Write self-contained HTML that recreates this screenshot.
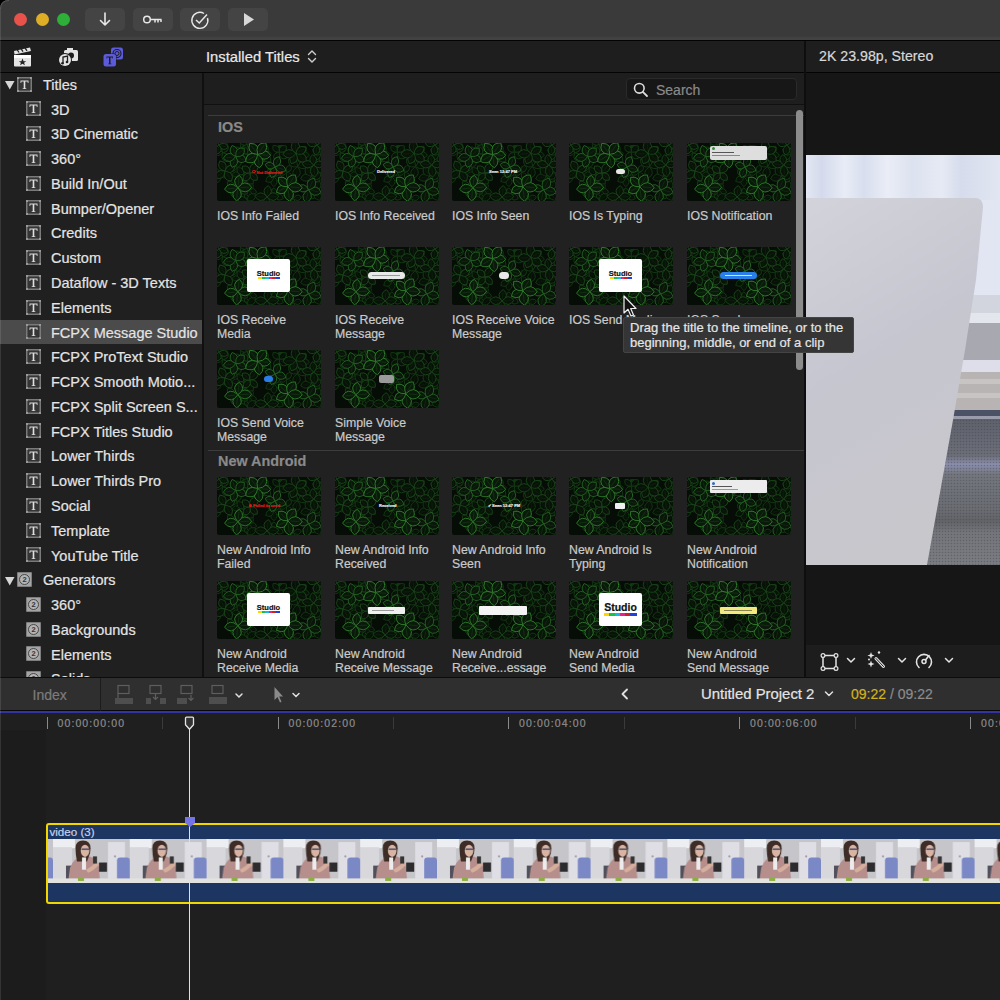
<!DOCTYPE html>
<html><head><meta charset="utf-8">
<style>
*{margin:0;padding:0;box-sizing:border-box}
html,body{width:1000px;height:1000px;overflow:hidden;background:#1e1e1e;font-family:"Liberation Sans",sans-serif;-webkit-text-stroke:0.2px currentColor}
.a{position:absolute}
.sb{position:absolute;font-size:14.5px;line-height:18px;color:#e4e4e4;white-space:nowrap}
.th{position:absolute;border-radius:2px}
.lb{position:absolute;font-size:12.3px;line-height:13.8px;color:#cacaca;white-space:nowrap}
.tt{position:absolute;font-size:4px;line-height:4px;color:#e8e8e8;white-space:nowrap;font-weight:bold}
.sep{position:absolute;left:208px;width:596px;height:1px;background:#3c3c3c}
.hdr{position:absolute;left:218px;font-size:14.4px;font-weight:bold;color:#8a8a8a;line-height:16px}
.btn{position:absolute;top:7.5px;width:40px;height:23.5px;border-radius:5px;background:#444}
.tl{position:absolute;top:716px;font-size:10.5px;color:#8c8c8c;line-height:14px;letter-spacing:1.1px}
.tk{position:absolute;top:717px;width:1px;height:12px;background:#8a8a8a}
.tks{position:absolute;top:717px;width:1px;height:12px;background:#3a3a3a}
</style></head><body>
<svg width="0" height="0" style="position:absolute">
<defs>
<symbol id="leaf" viewBox="0 0 104 58"><rect width="104" height="58" fill="#060d06"/><ellipse cx="64" cy="7" rx="6" ry="5" fill="#123a14"/><ellipse cx="88" cy="20" rx="3" ry="3" fill="#1a3a3a" opacity="0.6"/><g transform="translate(27.4 9.5) rotate(141)"><path d="M0 -4.5Q5.9 -0.5 0 4.5Q-5.9 -0.5 0 -4.5Z" fill="#071007" stroke="#143814" stroke-width="0.9"/><path d="M0 -2.7V2.7" stroke="#143814" stroke-width="0.4" opacity="0.5"/></g><g transform="translate(20.1 6.9) rotate(258)"><path d="M0 -4.5Q5.9 -0.5 0 4.5Q-5.9 -0.5 0 -4.5Z" fill="#071007" stroke="#143814" stroke-width="0.9"/><path d="M0 -2.7V2.7" stroke="#143814" stroke-width="0.4" opacity="0.5"/></g><g transform="translate(26.4 1.4) rotate(381)"><path d="M0 -5.0Q6.4 -0.5 0 5.0Q-6.4 -0.5 0 -5.0Z" fill="#071007" stroke="#143814" stroke-width="0.9"/><path d="M0 -3.0V3.0" stroke="#143814" stroke-width="0.4" opacity="0.5"/></g><g transform="translate(6.5 32.0) rotate(452)"><path d="M0 -4.4Q5.8 -0.4 0 4.4Q-5.8 -0.4 0 -4.4Z" fill="#071007" stroke="#143814" stroke-width="0.9"/><path d="M0 -2.7V2.7" stroke="#143814" stroke-width="0.4" opacity="0.5"/></g><g transform="translate(0.7 35.9) rotate(558)"><path d="M0 -4.2Q5.5 -0.4 0 4.2Q-5.5 -0.4 0 -4.2Z" fill="#071007" stroke="#143814" stroke-width="0.9"/><path d="M0 -2.5V2.5" stroke="#143814" stroke-width="0.4" opacity="0.5"/></g><g transform="translate(-0.5 28.6) rotate(682)"><path d="M0 -4.2Q5.4 -0.4 0 4.2Q-5.4 -0.4 0 -4.2Z" fill="#071007" stroke="#143814" stroke-width="0.9"/><path d="M0 -2.5V2.5" stroke="#143814" stroke-width="0.4" opacity="0.5"/></g><g transform="translate(25.6 35.1) rotate(148)"><path d="M0 -4.7Q6.2 -0.5 0 4.7Q-6.2 -0.5 0 -4.7Z" fill="#071007" stroke="#143814" stroke-width="0.9"/><path d="M0 -2.8V2.8" stroke="#143814" stroke-width="0.4" opacity="0.5"/></g><g transform="translate(19.1 31.4) rotate(266)"><path d="M0 -4.0Q5.2 -0.4 0 4.0Q-5.2 -0.4 0 -4.0Z" fill="#071007" stroke="#143814" stroke-width="0.9"/><path d="M0 -2.4V2.4" stroke="#143814" stroke-width="0.4" opacity="0.5"/></g><g transform="translate(25.9 27.7) rotate(400)"><path d="M0 -4.5Q5.8 -0.4 0 4.5Q-5.8 -0.4 0 -4.5Z" fill="#071007" stroke="#143814" stroke-width="0.9"/><path d="M0 -2.7V2.7" stroke="#143814" stroke-width="0.4" opacity="0.5"/></g><g transform="translate(25.2 51.3) rotate(329)"><path d="M0 -4.0Q5.1 -0.4 0 4.0Q-5.1 -0.4 0 -4.0Z" fill="#071007" stroke="#143814" stroke-width="0.9"/><path d="M0 -2.4V2.4" stroke="#143814" stroke-width="0.4" opacity="0.5"/></g><g transform="translate(30.7 52.5) rotate(418)"><path d="M0 -4.2Q5.4 -0.4 0 4.2Q-5.4 -0.4 0 -4.2Z" fill="#071007" stroke="#143814" stroke-width="0.9"/><path d="M0 -2.5V2.5" stroke="#143814" stroke-width="0.4" opacity="0.5"/></g><g transform="translate(29.6 58.2) rotate(506)"><path d="M0 -4.2Q5.5 -0.4 0 4.2Q-5.5 -0.4 0 -4.2Z" fill="#071007" stroke="#143814" stroke-width="0.9"/><path d="M0 -2.5V2.5" stroke="#143814" stroke-width="0.4" opacity="0.5"/></g><g transform="translate(24.4 57.0) rotate(591)"><path d="M0 -3.7Q4.8 -0.4 0 3.7Q-4.8 -0.4 0 -3.7Z" fill="#071007" stroke="#143814" stroke-width="0.9"/><path d="M0 -2.2V2.2" stroke="#143814" stroke-width="0.4" opacity="0.5"/></g><g transform="translate(79.6 8.1) rotate(311)"><path d="M0 -4.8Q6.2 -0.5 0 4.8Q-6.2 -0.5 0 -4.8Z" fill="#071007" stroke="#143814" stroke-width="0.9"/><path d="M0 -2.9V2.9" stroke="#143814" stroke-width="0.4" opacity="0.5"/></g><g transform="translate(86.0 7.2) rotate(395)"><path d="M0 -4.8Q6.3 -0.5 0 4.8Q-6.3 -0.5 0 -4.8Z" fill="#071007" stroke="#143814" stroke-width="0.9"/><path d="M0 -2.9V2.9" stroke="#143814" stroke-width="0.4" opacity="0.5"/></g><g transform="translate(87.8 11.8) rotate(457)"><path d="M0 -4.6Q6.0 -0.5 0 4.6Q-6.0 -0.5 0 -4.6Z" fill="#071007" stroke="#143814" stroke-width="0.9"/><path d="M0 -2.8V2.8" stroke="#143814" stroke-width="0.4" opacity="0.5"/></g><g transform="translate(83.5 15.8) rotate(537)"><path d="M0 -4.6Q6.0 -0.5 0 4.6Q-6.0 -0.5 0 -4.6Z" fill="#071007" stroke="#143814" stroke-width="0.9"/><path d="M0 -2.8V2.8" stroke="#143814" stroke-width="0.4" opacity="0.5"/></g><g transform="translate(79.1 12.8) rotate(609)"><path d="M0 -4.5Q5.8 -0.4 0 4.5Q-5.8 -0.4 0 -4.5Z" fill="#071007" stroke="#143814" stroke-width="0.9"/><path d="M0 -2.7V2.7" stroke="#143814" stroke-width="0.4" opacity="0.5"/></g><g transform="translate(102.8 45.4) rotate(397)"><path d="M0 -4.7Q6.1 -0.5 0 4.7Q-6.1 -0.5 0 -4.7Z" fill="#071007" stroke="#143814" stroke-width="0.9"/><path d="M0 -2.8V2.8" stroke="#143814" stroke-width="0.4" opacity="0.5"/></g><g transform="translate(104.2 51.7) rotate(480)"><path d="M0 -4.9Q6.4 -0.5 0 4.9Q-6.4 -0.5 0 -4.9Z" fill="#071007" stroke="#143814" stroke-width="0.9"/><path d="M0 -3.0V3.0" stroke="#143814" stroke-width="0.4" opacity="0.5"/></g><g transform="translate(97.1 52.3) rotate(582)"><path d="M0 -4.2Q5.4 -0.4 0 4.2Q-5.4 -0.4 0 -4.2Z" fill="#071007" stroke="#143814" stroke-width="0.9"/><path d="M0 -2.5V2.5" stroke="#143814" stroke-width="0.4" opacity="0.5"/></g><g transform="translate(96.2 45.9) rotate(672)"><path d="M0 -5.0Q6.5 -0.5 0 5.0Q-6.5 -0.5 0 -5.0Z" fill="#071007" stroke="#143814" stroke-width="0.9"/><path d="M0 -3.0V3.0" stroke="#143814" stroke-width="0.4" opacity="0.5"/></g><g transform="translate(66.0 29.8) rotate(263)"><path d="M0 -3.9Q5.0 -0.4 0 3.9Q-5.0 -0.4 0 -3.9Z" fill="#071007" stroke="#143814" stroke-width="0.9"/><path d="M0 -2.3V2.3" stroke="#143814" stroke-width="0.4" opacity="0.5"/></g><g transform="translate(71.7 25.8) rotate(387)"><path d="M0 -3.9Q5.1 -0.4 0 3.9Q-5.1 -0.4 0 -3.9Z" fill="#071007" stroke="#143814" stroke-width="0.9"/><path d="M0 -2.4V2.4" stroke="#143814" stroke-width="0.4" opacity="0.5"/></g><g transform="translate(72.2 33.1) rotate(509)"><path d="M0 -4.4Q5.7 -0.4 0 4.4Q-5.7 -0.4 0 -4.4Z" fill="#071007" stroke="#143814" stroke-width="0.9"/><path d="M0 -2.6V2.6" stroke="#143814" stroke-width="0.4" opacity="0.5"/></g><g transform="translate(100.4 42.9) rotate(385)"><path d="M0 -5.1Q6.6 -0.5 0 5.1Q-6.6 -0.5 0 -5.1Z" fill="#071007" stroke="#143814" stroke-width="0.9"/><path d="M0 -3.0V3.0" stroke="#143814" stroke-width="0.4" opacity="0.5"/></g><g transform="translate(100.6 52.4) rotate(515)"><path d="M0 -5.5Q7.1 -0.5 0 5.5Q-7.1 -0.5 0 -5.5Z" fill="#071007" stroke="#143814" stroke-width="0.9"/><path d="M0 -3.3V3.3" stroke="#143814" stroke-width="0.4" opacity="0.5"/></g><g transform="translate(92.4 46.7) rotate(637)"><path d="M0 -5.9Q7.6 -0.6 0 5.9Q-7.6 -0.6 0 -5.9Z" fill="#071007" stroke="#143814" stroke-width="0.9"/><path d="M0 -3.5V3.5" stroke="#143814" stroke-width="0.4" opacity="0.5"/></g><g transform="translate(97.0 29.1) rotate(390)"><path d="M0 -4.8Q6.2 -0.5 0 4.8Q-6.2 -0.5 0 -4.8Z" fill="#071007" stroke="#143814" stroke-width="0.9"/><path d="M0 -2.9V2.9" stroke="#143814" stroke-width="0.4" opacity="0.5"/></g><g transform="translate(98.9 35.2) rotate(475)"><path d="M0 -4.8Q6.2 -0.5 0 4.8Q-6.2 -0.5 0 -4.8Z" fill="#071007" stroke="#143814" stroke-width="0.9"/><path d="M0 -2.9V2.9" stroke="#143814" stroke-width="0.4" opacity="0.5"/></g><g transform="translate(94.0 38.1) rotate(546)"><path d="M0 -4.9Q6.4 -0.5 0 4.9Q-6.4 -0.5 0 -4.9Z" fill="#071007" stroke="#143814" stroke-width="0.9"/><path d="M0 -2.9V2.9" stroke="#143814" stroke-width="0.4" opacity="0.5"/></g><g transform="translate(89.1 34.5) rotate(617)"><path d="M0 -5.6Q7.3 -0.6 0 5.6Q-7.3 -0.6 0 -5.6Z" fill="#071007" stroke="#143814" stroke-width="0.9"/><path d="M0 -3.4V3.4" stroke="#143814" stroke-width="0.4" opacity="0.5"/></g><g transform="translate(91.8 28.6) rotate(690)"><path d="M0 -5.4Q7.0 -0.5 0 5.4Q-7.0 -0.5 0 -5.4Z" fill="#071007" stroke="#143814" stroke-width="0.9"/><path d="M0 -3.2V3.2" stroke="#143814" stroke-width="0.4" opacity="0.5"/></g><g transform="translate(16.2 25.4) rotate(259)"><path d="M0 -4.2Q5.4 -0.4 0 4.2Q-5.4 -0.4 0 -4.2Z" fill="#071007" stroke="#143814" stroke-width="0.9"/><path d="M0 -2.5V2.5" stroke="#143814" stroke-width="0.4" opacity="0.5"/></g><g transform="translate(21.4 20.4) rotate(375)"><path d="M0 -4.3Q5.6 -0.4 0 4.3Q-5.6 -0.4 0 -4.3Z" fill="#071007" stroke="#143814" stroke-width="0.9"/><path d="M0 -2.6V2.6" stroke="#143814" stroke-width="0.4" opacity="0.5"/></g><g transform="translate(23.3 28.1) rotate(499)"><path d="M0 -4.7Q6.1 -0.5 0 4.7Q-6.1 -0.5 0 -4.7Z" fill="#071007" stroke="#143814" stroke-width="0.9"/><path d="M0 -2.8V2.8" stroke="#143814" stroke-width="0.4" opacity="0.5"/></g><g transform="translate(35.7 48.3) rotate(106)"><path d="M0 -4.1Q5.3 -0.4 0 4.1Q-5.3 -0.4 0 -4.1Z" fill="#071007" stroke="#143814" stroke-width="0.9"/><path d="M0 -2.5V2.5" stroke="#143814" stroke-width="0.4" opacity="0.5"/></g><g transform="translate(32.3 50.8) rotate(171)"><path d="M0 -3.7Q4.8 -0.4 0 3.7Q-4.8 -0.4 0 -3.7Z" fill="#071007" stroke="#143814" stroke-width="0.9"/><path d="M0 -2.2V2.2" stroke="#143814" stroke-width="0.4" opacity="0.5"/></g><g transform="translate(27.9 48.4) rotate(252)"><path d="M0 -4.1Q5.3 -0.4 0 4.1Q-5.3 -0.4 0 -4.1Z" fill="#071007" stroke="#143814" stroke-width="0.9"/><path d="M0 -2.4V2.4" stroke="#143814" stroke-width="0.4" opacity="0.5"/></g><g transform="translate(29.6 43.6) rotate(329)"><path d="M0 -4.2Q5.4 -0.4 0 4.2Q-5.4 -0.4 0 -4.2Z" fill="#071007" stroke="#143814" stroke-width="0.9"/><path d="M0 -2.5V2.5" stroke="#143814" stroke-width="0.4" opacity="0.5"/></g><g transform="translate(33.6 43.7) rotate(388)"><path d="M0 -4.0Q5.1 -0.4 0 4.0Q-5.1 -0.4 0 -4.0Z" fill="#071007" stroke="#143814" stroke-width="0.9"/><path d="M0 -2.4V2.4" stroke="#143814" stroke-width="0.4" opacity="0.5"/></g><g transform="translate(102.6 25.2) rotate(347)"><path d="M0 -5.0Q6.5 -0.5 0 5.0Q-6.5 -0.5 0 -5.0Z" fill="#071007" stroke="#143814" stroke-width="0.9"/><path d="M0 -3.0V3.0" stroke="#143814" stroke-width="0.4" opacity="0.5"/></g><g transform="translate(109.0 30.5) rotate(454)"><path d="M0 -5.3Q6.9 -0.5 0 5.3Q-6.9 -0.5 0 -5.3Z" fill="#071007" stroke="#143814" stroke-width="0.9"/><path d="M0 -3.2V3.2" stroke="#143814" stroke-width="0.4" opacity="0.5"/></g><g transform="translate(100.4 33.1) rotate(588)"><path d="M0 -4.6Q5.9 -0.5 0 4.6Q-5.9 -0.5 0 -4.6Z" fill="#071007" stroke="#143814" stroke-width="0.9"/><path d="M0 -2.7V2.7" stroke="#143814" stroke-width="0.4" opacity="0.5"/></g><g transform="translate(105.0 15.7) rotate(164)"><path d="M0 -4.5Q5.9 -0.5 0 4.5Q-5.9 -0.5 0 -4.5Z" fill="#071007" stroke="#143814" stroke-width="0.9"/><path d="M0 -2.7V2.7" stroke="#143814" stroke-width="0.4" opacity="0.5"/></g><g transform="translate(99.9 13.6) rotate(240)"><path d="M0 -4.4Q5.8 -0.4 0 4.4Q-5.8 -0.4 0 -4.4Z" fill="#071007" stroke="#143814" stroke-width="0.9"/><path d="M0 -2.7V2.7" stroke="#143814" stroke-width="0.4" opacity="0.5"/></g><g transform="translate(99.8 8.9) rotate(302)"><path d="M0 -4.6Q6.0 -0.5 0 4.6Q-6.0 -0.5 0 -4.6Z" fill="#071007" stroke="#143814" stroke-width="0.9"/><path d="M0 -2.8V2.8" stroke="#143814" stroke-width="0.4" opacity="0.5"/></g><g transform="translate(105.6 7.6) rotate(387)"><path d="M0 -4.2Q5.5 -0.4 0 4.2Q-5.5 -0.4 0 -4.2Z" fill="#071007" stroke="#143814" stroke-width="0.9"/><path d="M0 -2.5V2.5" stroke="#143814" stroke-width="0.4" opacity="0.5"/></g><g transform="translate(108.4 10.9) rotate(444)"><path d="M0 -4.7Q6.2 -0.5 0 4.7Q-6.2 -0.5 0 -4.7Z" fill="#071007" stroke="#143814" stroke-width="0.9"/><path d="M0 -2.8V2.8" stroke="#143814" stroke-width="0.4" opacity="0.5"/></g><g transform="translate(42.2 7.7) rotate(309)"><path d="M0 -4.7Q6.1 -0.5 0 4.7Q-6.1 -0.5 0 -4.7Z" fill="#071007" stroke="#143814" stroke-width="0.9"/><path d="M0 -2.8V2.8" stroke="#143814" stroke-width="0.4" opacity="0.5"/></g><g transform="translate(47.0 5.8) rotate(373)"><path d="M0 -5.0Q6.5 -0.5 0 5.0Q-6.5 -0.5 0 -5.0Z" fill="#071007" stroke="#143814" stroke-width="0.9"/><path d="M0 -3.0V3.0" stroke="#143814" stroke-width="0.4" opacity="0.5"/></g><g transform="translate(50.1 10.7) rotate(451)"><path d="M0 -4.3Q5.5 -0.4 0 4.3Q-5.5 -0.4 0 -4.3Z" fill="#071007" stroke="#143814" stroke-width="0.9"/><path d="M0 -2.6V2.6" stroke="#143814" stroke-width="0.4" opacity="0.5"/></g><g transform="translate(47.0 14.9) rotate(525)"><path d="M0 -4.4Q5.7 -0.4 0 4.4Q-5.7 -0.4 0 -4.4Z" fill="#071007" stroke="#143814" stroke-width="0.9"/><path d="M0 -2.6V2.6" stroke="#143814" stroke-width="0.4" opacity="0.5"/></g><g transform="translate(42.3 14.1) rotate(587)"><path d="M0 -5.0Q6.5 -0.5 0 5.0Q-6.5 -0.5 0 -5.0Z" fill="#071007" stroke="#143814" stroke-width="0.9"/><path d="M0 -3.0V3.0" stroke="#143814" stroke-width="0.4" opacity="0.5"/></g><g transform="translate(62.2 54.0) rotate(111)"><path d="M0 -4.4Q5.7 -0.4 0 4.4Q-5.7 -0.4 0 -4.4Z" fill="#071007" stroke="#143814" stroke-width="0.9"/><path d="M0 -2.6V2.6" stroke="#143814" stroke-width="0.4" opacity="0.5"/></g><g transform="translate(54.9 55.5) rotate(226)"><path d="M0 -4.5Q5.8 -0.4 0 4.5Q-5.8 -0.4 0 -4.5Z" fill="#071007" stroke="#143814" stroke-width="0.9"/><path d="M0 -2.7V2.7" stroke="#143814" stroke-width="0.4" opacity="0.5"/></g><g transform="translate(57.2 48.7) rotate(347)"><path d="M0 -3.9Q5.0 -0.4 0 3.9Q-5.0 -0.4 0 -3.9Z" fill="#071007" stroke="#143814" stroke-width="0.9"/><path d="M0 -2.3V2.3" stroke="#143814" stroke-width="0.4" opacity="0.5"/></g><g transform="translate(32.6 37.3) rotate(134)"><path d="M0 -5.1Q6.7 -0.5 0 5.1Q-6.7 -0.5 0 -5.1Z" fill="#071007" stroke="#143814" stroke-width="0.9"/><path d="M0 -3.1V3.1" stroke="#143814" stroke-width="0.4" opacity="0.5"/></g><g transform="translate(23.3 35.3) rotate(255)"><path d="M0 -5.7Q7.4 -0.6 0 5.7Q-7.4 -0.6 0 -5.7Z" fill="#071007" stroke="#143814" stroke-width="0.9"/><path d="M0 -3.4V3.4" stroke="#143814" stroke-width="0.4" opacity="0.5"/></g><g transform="translate(30.3 29.2) rotate(378)"><path d="M0 -4.8Q6.2 -0.5 0 4.8Q-6.2 -0.5 0 -4.8Z" fill="#071007" stroke="#143814" stroke-width="0.9"/><path d="M0 -2.9V2.9" stroke="#143814" stroke-width="0.4" opacity="0.5"/></g><g transform="translate(34.4 3.5) rotate(117)"><path d="M0 -4.6Q5.9 -0.5 0 4.6Q-5.9 -0.5 0 -4.6Z" fill="#071007" stroke="#143814" stroke-width="0.9"/><path d="M0 -2.7V2.7" stroke="#143814" stroke-width="0.4" opacity="0.5"/></g><g transform="translate(27.9 5.6) rotate(210)"><path d="M0 -4.7Q6.2 -0.5 0 4.7Q-6.2 -0.5 0 -4.7Z" fill="#071007" stroke="#143814" stroke-width="0.9"/><path d="M0 -2.8V2.8" stroke="#143814" stroke-width="0.4" opacity="0.5"/></g><g transform="translate(26.6 -0.6) rotate(299)"><path d="M0 -4.2Q5.4 -0.4 0 4.2Q-5.4 -0.4 0 -4.2Z" fill="#071007" stroke="#143814" stroke-width="0.9"/><path d="M0 -2.5V2.5" stroke="#143814" stroke-width="0.4" opacity="0.5"/></g><g transform="translate(32.3 -2.9) rotate(385)"><path d="M0 -4.9Q6.3 -0.5 0 4.9Q-6.3 -0.5 0 -4.9Z" fill="#071007" stroke="#143814" stroke-width="0.9"/><path d="M0 -2.9V2.9" stroke="#143814" stroke-width="0.4" opacity="0.5"/></g><g transform="translate(75.6 59.8) rotate(192)"><path d="M0 -4.2Q5.5 -0.4 0 4.2Q-5.5 -0.4 0 -4.2Z" fill="#071007" stroke="#143814" stroke-width="0.9"/><path d="M0 -2.5V2.5" stroke="#143814" stroke-width="0.4" opacity="0.5"/></g><g transform="translate(73.9 52.4) rotate(322)"><path d="M0 -4.1Q5.4 -0.4 0 4.1Q-5.4 -0.4 0 -4.1Z" fill="#071007" stroke="#143814" stroke-width="0.9"/><path d="M0 -2.5V2.5" stroke="#143814" stroke-width="0.4" opacity="0.5"/></g><g transform="translate(80.4 54.8) rotate(437)"><path d="M0 -4.1Q5.4 -0.4 0 4.1Q-5.4 -0.4 0 -4.1Z" fill="#071007" stroke="#143814" stroke-width="0.9"/><path d="M0 -2.5V2.5" stroke="#143814" stroke-width="0.4" opacity="0.5"/></g><g transform="translate(76.1 20.0) rotate(310)"><path d="M0 -5.9Q7.6 -0.6 0 5.9Q-7.6 -0.6 0 -5.9Z" fill="#071007" stroke="#143814" stroke-width="0.9"/><path d="M0 -3.5V3.5" stroke="#143814" stroke-width="0.4" opacity="0.5"/></g><g transform="translate(86.2 22.1) rotate(433)"><path d="M0 -5.9Q7.6 -0.6 0 5.9Q-7.6 -0.6 0 -5.9Z" fill="#071007" stroke="#143814" stroke-width="0.9"/><path d="M0 -3.5V3.5" stroke="#143814" stroke-width="0.4" opacity="0.5"/></g><g transform="translate(79.6 29.5) rotate(550)"><path d="M0 -5.8Q7.6 -0.6 0 5.8Q-7.6 -0.6 0 -5.8Z" fill="#071007" stroke="#143814" stroke-width="0.9"/><path d="M0 -3.5V3.5" stroke="#143814" stroke-width="0.4" opacity="0.5"/></g><g transform="translate(33.3 15.0) rotate(144)"><path d="M0 -4.8Q6.2 -0.5 0 4.8Q-6.2 -0.5 0 -4.8Z" fill="#071007" stroke="#143814" stroke-width="0.9"/><path d="M0 -2.9V2.9" stroke="#143814" stroke-width="0.4" opacity="0.5"/></g><g transform="translate(27.3 14.0) rotate(228)"><path d="M0 -4.3Q5.6 -0.4 0 4.3Q-5.6 -0.4 0 -4.3Z" fill="#071007" stroke="#143814" stroke-width="0.9"/><path d="M0 -2.6V2.6" stroke="#143814" stroke-width="0.4" opacity="0.5"/></g><g transform="translate(27.8 7.4) rotate(324)"><path d="M0 -4.5Q5.9 -0.5 0 4.5Q-5.9 -0.5 0 -4.5Z" fill="#071007" stroke="#143814" stroke-width="0.9"/><path d="M0 -2.7V2.7" stroke="#143814" stroke-width="0.4" opacity="0.5"/></g><g transform="translate(33.9 8.4) rotate(412)"><path d="M0 -4.3Q5.6 -0.4 0 4.3Q-5.6 -0.4 0 -4.3Z" fill="#071007" stroke="#143814" stroke-width="0.9"/><path d="M0 -2.6V2.6" stroke="#143814" stroke-width="0.4" opacity="0.5"/></g><g transform="translate(59.8 13.0) rotate(214)"><path d="M0 -4.5Q5.9 -0.5 0 4.5Q-5.9 -0.5 0 -4.5Z" fill="#071007" stroke="#143814" stroke-width="0.9"/><path d="M0 -2.7V2.7" stroke="#143814" stroke-width="0.4" opacity="0.5"/></g><g transform="translate(59.1 5.9) rotate(316)"><path d="M0 -4.5Q5.9 -0.5 0 4.5Q-5.9 -0.5 0 -4.5Z" fill="#071007" stroke="#143814" stroke-width="0.9"/><path d="M0 -2.7V2.7" stroke="#143814" stroke-width="0.4" opacity="0.5"/></g><g transform="translate(65.8 6.0) rotate(408)"><path d="M0 -4.7Q6.2 -0.5 0 4.7Q-6.2 -0.5 0 -4.7Z" fill="#071007" stroke="#143814" stroke-width="0.9"/><path d="M0 -2.8V2.8" stroke="#143814" stroke-width="0.4" opacity="0.5"/></g><g transform="translate(65.8 12.4) rotate(492)"><path d="M0 -4.7Q6.1 -0.5 0 4.7Q-6.1 -0.5 0 -4.7Z" fill="#071007" stroke="#143814" stroke-width="0.9"/><path d="M0 -2.8V2.8" stroke="#143814" stroke-width="0.4" opacity="0.5"/></g><g transform="translate(16.4 49.5) rotate(197)"><path d="M0 -4.2Q5.4 -0.4 0 4.2Q-5.4 -0.4 0 -4.2Z" fill="#071007" stroke="#143814" stroke-width="0.9"/><path d="M0 -2.5V2.5" stroke="#143814" stroke-width="0.4" opacity="0.5"/></g><g transform="translate(14.0 42.1) rotate(313)"><path d="M0 -4.9Q6.4 -0.5 0 4.9Q-6.4 -0.5 0 -4.9Z" fill="#071007" stroke="#143814" stroke-width="0.9"/><path d="M0 -3.0V3.0" stroke="#143814" stroke-width="0.4" opacity="0.5"/></g><g transform="translate(22.0 43.8) rotate(429)"><path d="M0 -4.7Q6.1 -0.5 0 4.7Q-6.1 -0.5 0 -4.7Z" fill="#071007" stroke="#143814" stroke-width="0.9"/><path d="M0 -2.8V2.8" stroke="#143814" stroke-width="0.4" opacity="0.5"/></g><g transform="translate(49.8 15.2) rotate(128)"><path d="M0 -5.2Q6.7 -0.5 0 5.2Q-6.7 -0.5 0 -5.2Z" fill="#071007" stroke="#143814" stroke-width="0.9"/><path d="M0 -3.1V3.1" stroke="#143814" stroke-width="0.4" opacity="0.5"/></g><g transform="translate(41.4 14.2) rotate(243)"><path d="M0 -4.9Q6.3 -0.5 0 4.9Q-6.3 -0.5 0 -4.9Z" fill="#071007" stroke="#143814" stroke-width="0.9"/><path d="M0 -2.9V2.9" stroke="#143814" stroke-width="0.4" opacity="0.5"/></g><g transform="translate(47.5 6.6) rotate(379)"><path d="M0 -5.7Q7.4 -0.6 0 5.7Q-7.4 -0.6 0 -5.7Z" fill="#071007" stroke="#143814" stroke-width="0.9"/><path d="M0 -3.4V3.4" stroke="#143814" stroke-width="0.4" opacity="0.5"/></g><g transform="translate(8.5 14.3) rotate(149)"><path d="M0 -5.3Q6.9 -0.5 0 5.3Q-6.9 -0.5 0 -5.3Z" fill="#071007" stroke="#143814" stroke-width="0.9"/><path d="M0 -3.2V3.2" stroke="#143814" stroke-width="0.4" opacity="0.5"/></g><g transform="translate(1.1 9.6) rotate(272)"><path d="M0 -4.7Q6.1 -0.5 0 4.7Q-6.1 -0.5 0 -4.7Z" fill="#071007" stroke="#143814" stroke-width="0.9"/><path d="M0 -2.8V2.8" stroke="#143814" stroke-width="0.4" opacity="0.5"/></g><g transform="translate(7.9 5.3) rotate(385)"><path d="M0 -5.0Q6.5 -0.5 0 5.0Q-6.5 -0.5 0 -5.0Z" fill="#071007" stroke="#143814" stroke-width="0.9"/><path d="M0 -3.0V3.0" stroke="#143814" stroke-width="0.4" opacity="0.5"/></g><g transform="translate(61.5 35.0) rotate(104)"><path d="M0 -4.9Q6.3 -0.5 0 4.9Q-6.3 -0.5 0 -4.9Z" fill="#071007" stroke="#143814" stroke-width="0.9"/><path d="M0 -2.9V2.9" stroke="#143814" stroke-width="0.4" opacity="0.5"/></g><g transform="translate(56.9 38.7) rotate(179)"><path d="M0 -4.9Q6.4 -0.5 0 4.9Q-6.4 -0.5 0 -4.9Z" fill="#071007" stroke="#143814" stroke-width="0.9"/><path d="M0 -2.9V2.9" stroke="#143814" stroke-width="0.4" opacity="0.5"/></g><g transform="translate(52.8 36.1) rotate(240)"><path d="M0 -4.6Q6.0 -0.5 0 4.6Q-6.0 -0.5 0 -4.6Z" fill="#071007" stroke="#143814" stroke-width="0.9"/><path d="M0 -2.8V2.8" stroke="#143814" stroke-width="0.4" opacity="0.5"/></g><g transform="translate(53.9 30.1) rotate(322)"><path d="M0 -4.7Q6.1 -0.5 0 4.7Q-6.1 -0.5 0 -4.7Z" fill="#071007" stroke="#143814" stroke-width="0.9"/><path d="M0 -2.8V2.8" stroke="#143814" stroke-width="0.4" opacity="0.5"/></g><g transform="translate(59.4 29.8) rotate(393)"><path d="M0 -4.8Q6.2 -0.5 0 4.8Q-6.2 -0.5 0 -4.8Z" fill="#071007" stroke="#143814" stroke-width="0.9"/><path d="M0 -2.9V2.9" stroke="#143814" stroke-width="0.4" opacity="0.5"/></g><g transform="translate(32.4 62.9) rotate(159)"><path d="M0 -5.4Q7.0 -0.5 0 5.4Q-7.0 -0.5 0 -5.4Z" fill="#071007" stroke="#143814" stroke-width="0.9"/><path d="M0 -3.2V3.2" stroke="#143814" stroke-width="0.4" opacity="0.5"/></g><g transform="translate(25.5 56.9) rotate(280)"><path d="M0 -5.1Q6.6 -0.5 0 5.1Q-6.6 -0.5 0 -5.1Z" fill="#071007" stroke="#143814" stroke-width="0.9"/><path d="M0 -3.0V3.0" stroke="#143814" stroke-width="0.4" opacity="0.5"/></g><g transform="translate(34.4 54.4) rotate(409)"><path d="M0 -5.2Q6.7 -0.5 0 5.2Q-6.7 -0.5 0 -5.2Z" fill="#071007" stroke="#143814" stroke-width="0.9"/><path d="M0 -3.1V3.1" stroke="#143814" stroke-width="0.4" opacity="0.5"/></g><g transform="translate(104.7 2.6) rotate(97)"><path d="M0 -4.7Q6.1 -0.5 0 4.7Q-6.1 -0.5 0 -4.7Z" fill="#081308" stroke="#1a441a" stroke-width="0.9"/><path d="M0 -2.8V2.8" stroke="#1a441a" stroke-width="0.4" opacity="0.5"/></g><g transform="translate(99.4 7.1) rotate(187)"><path d="M0 -5.1Q6.7 -0.5 0 5.1Q-6.7 -0.5 0 -5.1Z" fill="#081308" stroke="#1a441a" stroke-width="0.9"/><path d="M0 -3.1V3.1" stroke="#1a441a" stroke-width="0.4" opacity="0.5"/></g><g transform="translate(94.9 0.3) rotate(289)"><path d="M0 -5.4Q7.0 -0.5 0 5.4Q-7.0 -0.5 0 -5.4Z" fill="#081308" stroke="#1a441a" stroke-width="0.9"/><path d="M0 -3.2V3.2" stroke="#1a441a" stroke-width="0.4" opacity="0.5"/></g><g transform="translate(100.7 -2.8) rotate(368)"><path d="M0 -4.9Q6.4 -0.5 0 4.9Q-6.4 -0.5 0 -4.9Z" fill="#081308" stroke="#1a441a" stroke-width="0.9"/><path d="M0 -2.9V2.9" stroke="#1a441a" stroke-width="0.4" opacity="0.5"/></g><g transform="translate(6.6 3.3) rotate(105)"><path d="M0 -4.8Q6.2 -0.5 0 4.8Q-6.2 -0.5 0 -4.8Z" fill="#081308" stroke="#1a441a" stroke-width="0.9"/><path d="M0 -2.9V2.9" stroke="#1a441a" stroke-width="0.4" opacity="0.5"/></g><g transform="translate(1.3 6.5) rotate(188)"><path d="M0 -4.5Q5.9 -0.5 0 4.5Q-5.9 -0.5 0 -4.5Z" fill="#081308" stroke="#1a441a" stroke-width="0.9"/><path d="M0 -2.7V2.7" stroke="#1a441a" stroke-width="0.4" opacity="0.5"/></g><g transform="translate(-3.0 1.6) rotate(275)"><path d="M0 -5.0Q6.6 -0.5 0 5.0Q-6.6 -0.5 0 -5.0Z" fill="#081308" stroke="#1a441a" stroke-width="0.9"/><path d="M0 -3.0V3.0" stroke="#1a441a" stroke-width="0.4" opacity="0.5"/></g><g transform="translate(3.2 -3.0) rotate(373)"><path d="M0 -5.1Q6.6 -0.5 0 5.1Q-6.6 -0.5 0 -5.1Z" fill="#081308" stroke="#1a441a" stroke-width="0.9"/><path d="M0 -3.1V3.1" stroke="#1a441a" stroke-width="0.4" opacity="0.5"/></g><g transform="translate(84.2 14.4) rotate(128)"><path d="M0 -6.5Q8.5 -0.7 0 6.5Q-8.5 -0.7 0 -6.5Z" fill="#081308" stroke="#1a441a" stroke-width="0.9"/><path d="M0 -3.9V3.9" stroke="#1a441a" stroke-width="0.4" opacity="0.5"/></g><g transform="translate(76.7 15.5) rotate(204)"><path d="M0 -5.6Q7.3 -0.6 0 5.6Q-7.3 -0.6 0 -5.6Z" fill="#081308" stroke="#1a441a" stroke-width="0.9"/><path d="M0 -3.4V3.4" stroke="#1a441a" stroke-width="0.4" opacity="0.5"/></g><g transform="translate(72.4 10.8) rotate(267)"><path d="M0 -6.6Q8.5 -0.7 0 6.6Q-8.5 -0.7 0 -6.6Z" fill="#081308" stroke="#1a441a" stroke-width="0.9"/><path d="M0 -3.9V3.9" stroke="#1a441a" stroke-width="0.4" opacity="0.5"/></g><g transform="translate(78.4 3.9) rotate(354)"><path d="M0 -6.5Q8.5 -0.7 0 6.5Q-8.5 -0.7 0 -6.5Z" fill="#081308" stroke="#1a441a" stroke-width="0.9"/><path d="M0 -3.9V3.9" stroke="#1a441a" stroke-width="0.4" opacity="0.5"/></g><g transform="translate(84.0 7.5) rotate(420)"><path d="M0 -5.8Q7.5 -0.6 0 5.8Q-7.5 -0.6 0 -5.8Z" fill="#081308" stroke="#1a441a" stroke-width="0.9"/><path d="M0 -3.5V3.5" stroke="#1a441a" stroke-width="0.4" opacity="0.5"/></g><g transform="translate(101.9 21.4) rotate(83)"><path d="M0 -5.2Q6.8 -0.5 0 5.2Q-6.8 -0.5 0 -5.2Z" fill="#081308" stroke="#1a441a" stroke-width="0.9"/><path d="M0 -3.1V3.1" stroke="#1a441a" stroke-width="0.4" opacity="0.5"/></g><g transform="translate(97.2 28.0) rotate(175)"><path d="M0 -6.0Q7.8 -0.6 0 6.0Q-7.8 -0.6 0 -6.0Z" fill="#081308" stroke="#1a441a" stroke-width="0.9"/><path d="M0 -3.6V3.6" stroke="#1a441a" stroke-width="0.4" opacity="0.5"/></g><g transform="translate(90.9 21.3) rotate(277)"><path d="M0 -5.8Q7.5 -0.6 0 5.8Q-7.5 -0.6 0 -5.8Z" fill="#081308" stroke="#1a441a" stroke-width="0.9"/><path d="M0 -3.5V3.5" stroke="#1a441a" stroke-width="0.4" opacity="0.5"/></g><g transform="translate(96.2 16.8) rotate(354)"><path d="M0 -5.2Q6.8 -0.5 0 5.2Q-6.8 -0.5 0 -5.2Z" fill="#081308" stroke="#1a441a" stroke-width="0.9"/><path d="M0 -3.1V3.1" stroke="#1a441a" stroke-width="0.4" opacity="0.5"/></g><g transform="translate(11.3 33.0) rotate(147)"><path d="M0 -6.0Q7.8 -0.6 0 6.0Q-7.8 -0.6 0 -6.0Z" fill="#081308" stroke="#1a441a" stroke-width="0.9"/><path d="M0 -3.6V3.6" stroke="#1a441a" stroke-width="0.4" opacity="0.5"/></g><g transform="translate(3.3 31.4) rotate(234)"><path d="M0 -5.8Q7.6 -0.6 0 5.8Q-7.6 -0.6 0 -5.8Z" fill="#081308" stroke="#1a441a" stroke-width="0.9"/><path d="M0 -3.5V3.5" stroke="#1a441a" stroke-width="0.4" opacity="0.5"/></g><g transform="translate(5.5 23.0) rotate(333)"><path d="M0 -5.6Q7.2 -0.6 0 5.6Q-7.2 -0.6 0 -5.6Z" fill="#081308" stroke="#1a441a" stroke-width="0.9"/><path d="M0 -3.3V3.3" stroke="#1a441a" stroke-width="0.4" opacity="0.5"/></g><g transform="translate(12.9 26.0) rotate(428)"><path d="M0 -5.2Q6.8 -0.5 0 5.2Q-6.8 -0.5 0 -5.2Z" fill="#081308" stroke="#1a441a" stroke-width="0.9"/><path d="M0 -3.1V3.1" stroke="#1a441a" stroke-width="0.4" opacity="0.5"/></g><g transform="translate(36.6 33.6) rotate(135)"><path d="M0 -5.1Q6.7 -0.5 0 5.1Q-6.7 -0.5 0 -5.1Z" fill="#081308" stroke="#1a441a" stroke-width="0.9"/><path d="M0 -3.1V3.1" stroke="#1a441a" stroke-width="0.4" opacity="0.5"/></g><g transform="translate(29.9 33.9) rotate(218)"><path d="M0 -5.0Q6.5 -0.5 0 5.0Q-6.5 -0.5 0 -5.0Z" fill="#081308" stroke="#1a441a" stroke-width="0.9"/><path d="M0 -3.0V3.0" stroke="#1a441a" stroke-width="0.4" opacity="0.5"/></g><g transform="translate(29.2 26.6) rotate(312)"><path d="M0 -5.1Q6.6 -0.5 0 5.1Q-6.6 -0.5 0 -5.1Z" fill="#081308" stroke="#1a441a" stroke-width="0.9"/><path d="M0 -3.1V3.1" stroke="#1a441a" stroke-width="0.4" opacity="0.5"/></g><g transform="translate(36.7 25.2) rotate(397)"><path d="M0 -6.0Q7.9 -0.6 0 6.0Q-7.9 -0.6 0 -6.0Z" fill="#081308" stroke="#1a441a" stroke-width="0.9"/><path d="M0 -3.6V3.6" stroke="#1a441a" stroke-width="0.4" opacity="0.5"/></g><g transform="translate(55.9 53.6) rotate(86)"><path d="M0 -5.9Q7.7 -0.6 0 5.9Q-7.7 -0.6 0 -5.9Z" fill="#081308" stroke="#1a441a" stroke-width="0.9"/><path d="M0 -3.6V3.6" stroke="#1a441a" stroke-width="0.4" opacity="0.5"/></g><g transform="translate(49.7 59.7) rotate(183)"><path d="M0 -5.8Q7.5 -0.6 0 5.8Q-7.5 -0.6 0 -5.8Z" fill="#081308" stroke="#1a441a" stroke-width="0.9"/><path d="M0 -3.5V3.5" stroke="#1a441a" stroke-width="0.4" opacity="0.5"/></g><g transform="translate(44.0 53.7) rotate(273)"><path d="M0 -6.0Q7.8 -0.6 0 6.0Q-7.8 -0.6 0 -6.0Z" fill="#081308" stroke="#1a441a" stroke-width="0.9"/><path d="M0 -3.6V3.6" stroke="#1a441a" stroke-width="0.4" opacity="0.5"/></g><g transform="translate(50.7 48.3) rotate(367)"><path d="M0 -5.7Q7.5 -0.6 0 5.7Q-7.5 -0.6 0 -5.7Z" fill="#081308" stroke="#1a441a" stroke-width="0.9"/><path d="M0 -3.4V3.4" stroke="#1a441a" stroke-width="0.4" opacity="0.5"/></g><g transform="translate(63.5 25.6) rotate(106)"><path d="M0 -5.7Q7.4 -0.6 0 5.7Q-7.4 -0.6 0 -5.7Z" fill="#091609" stroke="#236023" stroke-width="0.9"/><path d="M0 -3.4V3.4" stroke="#236023" stroke-width="0.4" opacity="0.5"/></g><g transform="translate(56.2 29.3) rotate(199)"><path d="M0 -5.6Q7.2 -0.6 0 5.6Q-7.2 -0.6 0 -5.6Z" fill="#091609" stroke="#236023" stroke-width="0.9"/><path d="M0 -3.3V3.3" stroke="#236023" stroke-width="0.4" opacity="0.5"/></g><g transform="translate(53.1 22.7) rotate(285)"><path d="M0 -5.1Q6.7 -0.5 0 5.1Q-6.7 -0.5 0 -5.1Z" fill="#091609" stroke="#236023" stroke-width="0.9"/><path d="M0 -3.1V3.1" stroke="#236023" stroke-width="0.4" opacity="0.5"/></g><g transform="translate(60.0 18.9) rotate(381)"><path d="M0 -5.5Q7.1 -0.5 0 5.5Q-7.1 -0.5 0 -5.5Z" fill="#091609" stroke="#236023" stroke-width="0.9"/><path d="M0 -3.3V3.3" stroke="#236023" stroke-width="0.4" opacity="0.5"/></g><g transform="translate(23.9 15.7) rotate(113)"><path d="M0 -5.6Q7.3 -0.6 0 5.6Q-7.3 -0.6 0 -5.6Z" fill="#091609" stroke="#236023" stroke-width="0.9"/><path d="M0 -3.4V3.4" stroke="#236023" stroke-width="0.4" opacity="0.5"/></g><g transform="translate(16.9 18.9) rotate(198)"><path d="M0 -5.7Q7.4 -0.6 0 5.7Q-7.4 -0.6 0 -5.7Z" fill="#091609" stroke="#236023" stroke-width="0.9"/><path d="M0 -3.4V3.4" stroke="#236023" stroke-width="0.4" opacity="0.5"/></g><g transform="translate(12.5 14.4) rotate(262)"><path d="M0 -6.2Q8.1 -0.6 0 6.2Q-8.1 -0.6 0 -6.2Z" fill="#091609" stroke="#236023" stroke-width="0.9"/><path d="M0 -3.7V3.7" stroke="#236023" stroke-width="0.4" opacity="0.5"/></g><g transform="translate(16.9 8.0) rotate(342)"><path d="M0 -5.8Q7.5 -0.6 0 5.8Q-7.5 -0.6 0 -5.8Z" fill="#091609" stroke="#236023" stroke-width="0.9"/><path d="M0 -3.5V3.5" stroke="#236023" stroke-width="0.4" opacity="0.5"/></g><g transform="translate(23.0 9.4) rotate(406)"><path d="M0 -5.9Q7.7 -0.6 0 5.9Q-7.7 -0.6 0 -5.9Z" fill="#091609" stroke="#236023" stroke-width="0.9"/><path d="M0 -3.5V3.5" stroke="#236023" stroke-width="0.4" opacity="0.5"/></g><g transform="translate(97.8 48.1) rotate(102)"><path d="M0 -6.5Q8.4 -0.6 0 6.5Q-8.4 -0.6 0 -6.5Z" fill="#091609" stroke="#236023" stroke-width="0.9"/><path d="M0 -3.9V3.9" stroke="#236023" stroke-width="0.4" opacity="0.5"/></g><g transform="translate(90.2 53.2) rotate(192)"><path d="M0 -6.6Q8.5 -0.7 0 6.6Q-8.5 -0.7 0 -6.6Z" fill="#091609" stroke="#236023" stroke-width="0.9"/><path d="M0 -3.9V3.9" stroke="#236023" stroke-width="0.4" opacity="0.5"/></g><g transform="translate(86.1 45.4) rotate(284)"><path d="M0 -5.6Q7.3 -0.6 0 5.6Q-7.3 -0.6 0 -5.6Z" fill="#091609" stroke="#236023" stroke-width="0.9"/><path d="M0 -3.4V3.4" stroke="#236023" stroke-width="0.4" opacity="0.5"/></g><g transform="translate(94.3 41.1) rotate(386)"><path d="M0 -6.4Q8.3 -0.6 0 6.4Q-8.3 -0.6 0 -6.4Z" fill="#091609" stroke="#236023" stroke-width="0.9"/><path d="M0 -3.8V3.8" stroke="#236023" stroke-width="0.4" opacity="0.5"/></g><g transform="translate(47.1 12.0) rotate(95)"><path d="M0 -6.6Q8.5 -0.7 0 6.6Q-8.5 -0.7 0 -6.6Z" fill="#0a1a0a" stroke="#2f7a2b" stroke-width="0.9"/><path d="M0 -3.9V3.9" stroke="#2f7a2b" stroke-width="0.4" opacity="0.5"/></g><g transform="translate(41.6 18.1) rotate(172)"><path d="M0 -6.8Q8.8 -0.7 0 6.8Q-8.8 -0.7 0 -6.8Z" fill="#0a1a0a" stroke="#2f7a2b" stroke-width="0.9"/><path d="M0 -4.1V4.1" stroke="#2f7a2b" stroke-width="0.4" opacity="0.5"/></g><g transform="translate(34.7 15.0) rotate(239)"><path d="M0 -6.9Q9.0 -0.7 0 6.9Q-9.0 -0.7 0 -6.9Z" fill="#0a1a0a" stroke="#2f7a2b" stroke-width="0.9"/><path d="M0 -4.2V4.2" stroke="#2f7a2b" stroke-width="0.4" opacity="0.5"/></g><g transform="translate(36.7 5.9) rotate(325)"><path d="M0 -6.8Q8.8 -0.7 0 6.8Q-8.8 -0.7 0 -6.8Z" fill="#0a1a0a" stroke="#2f7a2b" stroke-width="0.9"/><path d="M0 -4.1V4.1" stroke="#2f7a2b" stroke-width="0.4" opacity="0.5"/></g><g transform="translate(44.7 5.6) rotate(395)"><path d="M0 -7.1Q9.2 -0.7 0 7.1Q-9.2 -0.7 0 -7.1Z" fill="#0a1a0a" stroke="#2f7a2b" stroke-width="0.9"/><path d="M0 -4.2V4.2" stroke="#2f7a2b" stroke-width="0.4" opacity="0.5"/></g><g transform="translate(27.7 44.4) rotate(88)"><path d="M0 -7.0Q9.0 -0.7 0 7.0Q-9.0 -0.7 0 -7.0Z" fill="#0a1a0a" stroke="#2f7a2b" stroke-width="0.9"/><path d="M0 -4.2V4.2" stroke="#2f7a2b" stroke-width="0.4" opacity="0.5"/></g><g transform="translate(20.1 51.3) rotate(186)"><path d="M0 -6.6Q8.6 -0.7 0 6.6Q-8.6 -0.7 0 -6.6Z" fill="#0a1a0a" stroke="#2f7a2b" stroke-width="0.9"/><path d="M0 -4.0V4.0" stroke="#2f7a2b" stroke-width="0.4" opacity="0.5"/></g><g transform="translate(14.2 45.5) rotate(263)"><path d="M0 -6.7Q8.7 -0.7 0 6.7Q-8.7 -0.7 0 -6.7Z" fill="#0a1a0a" stroke="#2f7a2b" stroke-width="0.9"/><path d="M0 -4.0V4.0" stroke="#2f7a2b" stroke-width="0.4" opacity="0.5"/></g><g transform="translate(21.6 38.5) rotate(367)"><path d="M0 -6.2Q8.1 -0.6 0 6.2Q-8.1 -0.6 0 -6.2Z" fill="#0a1a0a" stroke="#2f7a2b" stroke-width="0.9"/><path d="M0 -3.7V3.7" stroke="#2f7a2b" stroke-width="0.4" opacity="0.5"/></g><g transform="translate(71.7 51.0) rotate(173)"><path d="M0 -7.3Q9.5 -0.7 0 7.3Q-9.5 -0.7 0 -7.3Z" fill="#0a1a0a" stroke="#2f7a2b" stroke-width="0.9"/><path d="M0 -4.4V4.4" stroke="#2f7a2b" stroke-width="0.4" opacity="0.5"/></g><g transform="translate(65.2 46.4) rotate(244)"><path d="M0 -6.2Q8.0 -0.6 0 6.2Q-8.0 -0.6 0 -6.2Z" fill="#0a1a0a" stroke="#2f7a2b" stroke-width="0.9"/><path d="M0 -3.7V3.7" stroke="#2f7a2b" stroke-width="0.4" opacity="0.5"/></g><g transform="translate(66.2 39.0) rotate(316)"><path d="M0 -6.5Q8.4 -0.6 0 6.5Q-8.4 -0.6 0 -6.5Z" fill="#0a1a0a" stroke="#2f7a2b" stroke-width="0.9"/><path d="M0 -3.9V3.9" stroke="#2f7a2b" stroke-width="0.4" opacity="0.5"/></g><g transform="translate(74.4 37.8) rotate(392)"><path d="M0 -7.0Q9.1 -0.7 0 7.0Q-9.1 -0.7 0 -7.0Z" fill="#0a1a0a" stroke="#2f7a2b" stroke-width="0.9"/><path d="M0 -4.2V4.2" stroke="#2f7a2b" stroke-width="0.4" opacity="0.5"/></g><g transform="translate(78.0 44.3) rotate(455)"><path d="M0 -7.3Q9.5 -0.7 0 7.3Q-9.5 -0.7 0 -7.3Z" fill="#0a1a0a" stroke="#2f7a2b" stroke-width="0.9"/><path d="M0 -4.4V4.4" stroke="#2f7a2b" stroke-width="0.4" opacity="0.5"/></g></symbol>
<symbol id="frame" viewBox="0 0 76.8 43" preserveAspectRatio="none">
<rect width="76.8" height="43" fill="#c6c6ca"/>
<rect x="0" y="0" width="22" height="9" fill="#eceef2"/>
<rect x="0" y="8" width="19" height="35" fill="#d8d8dc"/>
<rect x="13" y="26" width="6" height="17" fill="#50505c"/>
<path d="M15 43L17 28Q21 18 29 17L37 17Q44 19 46 28L47 43Z" fill="#b68e8c"/>
<path d="M22.5 9Q22.5 1.5 30 1.5Q37.5 1.5 37.5 9L37 14L34 22L24 22Q22.5 16 22.5 9Z" fill="#3e2c26"/>
<ellipse cx="32" cy="11.5" rx="4.3" ry="6" fill="#d8b4a4"/>
<rect x="28.5" y="9.2" width="7.5" height="1.6" fill="#5a5a70"/>
<rect x="29" y="18" width="4" height="12" fill="#ececec"/>
<path d="M33 30Q39 27 44 22L46 25Q41 31 35 33Z" fill="#d6ae9c"/>
<rect x="40" y="17" width="4" height="7" fill="#333"/>
<rect x="46" y="23" width="8" height="9" fill="#2c2c2e"/>
<rect x="55" y="3" width="17" height="36" fill="#dedee4"/>
<circle cx="62" cy="17" r="1" fill="#9a9aa4"/>
<path d="M64 43V21Q64 18 67 18H74Q76.8 18 76.8 21V43Z" fill="#7b88c6"/>
<rect x="0" y="38.5" width="76.8" height="4.5" fill="#e2e2e0"/>
<rect x="25" y="38" width="6" height="3" fill="#8ab040"/>
</symbol>
<symbol id="icT" viewBox="0 0 15 15"><rect x="0" y="0" width="15" height="15" fill="#7a7a7a"/><rect x="1.5" y="1.5" width="12" height="12" fill="#353535"/><rect x="0" y="0" width="2" height="2" fill="#9a9a9a"/><rect x="13" y="0" width="2" height="2" fill="#9a9a9a"/><rect x="0" y="13" width="2" height="2" fill="#9a9a9a"/><rect x="13" y="13" width="2" height="2" fill="#9a9a9a"/><path d="M3.5 3.5H11.5V6H10.8L10.5 4.5H8.3V11.2L9.4 11.5V12H5.6V11.5L6.7 11.2V4.5H4.5L4.2 6H3.5Z" fill="#e0e0e0"/></symbol>
<symbol id="icG" viewBox="0 0 15 15"><rect x="0" y="0" width="15" height="15" rx="1" fill="#7e7e7e"/><rect x="1" y="1" width="13" height="13" fill="#a4a4a4"/><circle cx="7.5" cy="7.5" r="5" fill="#b4b4b4" stroke="#3c3c3c" stroke-width="0.9"/><text x="7.5" y="10.2" font-size="7.5" font-weight="bold" text-anchor="middle" fill="#333" font-family="Liberation Sans" style="-webkit-text-stroke:0">2</text></symbol>
</defs></svg>

<!-- title bar -->
<div class="a" style="left:0;top:0;width:1000px;height:40px;background:linear-gradient(#3a3a3a 0,#3a3a3a 36px,#424242 38px)"></div>
<div class="a" style="left:14px;top:13px;width:13px;height:13px;border-radius:50%;background:#e9524a"></div>
<div class="a" style="left:35.5px;top:13px;width:13px;height:13px;border-radius:50%;background:#dfae25"></div>
<div class="a" style="left:57px;top:13px;width:13px;height:13px;border-radius:50%;background:#2fae3a"></div>
<div class="btn" style="left:85px"></div>
<div class="btn" style="left:133px"></div>
<div class="btn" style="left:180px"></div>
<div class="btn" style="left:228px"></div>
<svg class="a" style="left:98px;top:11px" width="14" height="17" viewBox="0 0 14 17"><path d="M7 2V14M2.5 9.5L7 14L11.5 9.5" stroke="#e8e8e8" stroke-width="1.6" fill="none" stroke-linecap="round" stroke-linejoin="round"/></svg>
<svg class="a" style="left:142px;top:13px" width="22" height="13" viewBox="0 0 22 13"><circle cx="5" cy="6.5" r="3.3" stroke="#e8e8e8" stroke-width="1.5" fill="none"/><path d="M8.3 6.5H19.5M13 6.5V9.5M16 6.5V9.5M19 6.5V9" stroke="#e8e8e8" stroke-width="1.5" fill="none"/></svg>
<svg class="a" style="left:190px;top:10px" width="20" height="20" viewBox="0 0 20 20"><path d="M17.5 8A8 8 0 1 1 14 3.5" stroke="#e8e8e8" stroke-width="1.4" fill="none"/><path d="M6 10L9.3 13L17 4.5" stroke="#e8e8e8" stroke-width="1.5" fill="none"/></svg>
<svg class="a" style="left:243px;top:12px" width="12" height="15" viewBox="0 0 12 15"><path d="M1 1L11 7.5L1 14Z" fill="#d8d8d8"/></svg>
<div class="a" style="left:0;top:39.5px;width:1000px;height:1.5px;background:#030303"></div>

<!-- row 2 -->
<div class="a" style="left:0;top:41px;width:1000px;height:31px;background:#1e1e1e"></div>
<svg class="a" style="left:13px;top:46px" width="19" height="21" viewBox="0 0 19 21"><path d="M1 5L17 1.5L18 5L1.5 8.5Z" fill="#e4e4e4"/><path d="M4 3.5L6 6.5M8 2.7L10 5.7M12 1.8L14 4.8" stroke="#222" stroke-width="1.3"/><rect x="1" y="9" width="17" height="11.5" rx="1" fill="#e4e4e4"/><rect x="1" y="9" width="17" height="3" fill="#fff"/><path d="M9.5 12.5L10.6 15.2H13.2L11.1 16.8L11.9 19.2L9.5 17.7L7.1 19.2L7.9 16.8L5.8 15.2H8.4Z" fill="#222"/></svg>
<svg class="a" style="left:57px;top:47px" width="22" height="20" viewBox="0 0 22 20"><rect x="7" y="3" width="14" height="11" rx="1.5" fill="#e4e4e4"/><rect x="10" y="1" width="6" height="3" fill="#e4e4e4"/><circle cx="14" cy="8.5" r="3" fill="#1e1e1e"/><circle cx="8" cy="13" r="7" fill="#1e1e1e"/><circle cx="8" cy="13" r="6" fill="#e4e4e4"/><path d="M6 16.5V10L10.5 9V15" stroke="#1e1e1e" stroke-width="1.3" fill="none"/><circle cx="5.5" cy="16.3" r="1.3" fill="#1e1e1e"/><circle cx="10" cy="15" r="1.3" fill="#1e1e1e"/></svg>
<svg class="a" style="left:103px;top:47px" width="21" height="20" viewBox="0 0 21 20"><rect x="8" y="0.5" width="12" height="12" rx="2.5" fill="#5b5bdc"/><circle cx="14" cy="6.5" r="4" fill="none" stroke="#1e1e1e" stroke-width="1.1"/><circle cx="14" cy="6.5" r="2" fill="none" stroke="#1e1e1e" stroke-width="1"/><rect x="0" y="6.5" width="13.5" height="13" rx="2.5" fill="#1e1e1e"/><rect x="0.5" y="7" width="12.5" height="12.5" rx="2.5" fill="#5b5bdc"/><path d="M3.5 9.5H10V11.5H9.5L9.3 10.5H7.5V16.5L8.4 16.8V17.3H5.1V16.8L6 16.5V10.5H4.2L4 11.5H3.5Z" fill="#1e1e1e"/></svg>
<div class="a" style="left:206px;top:48px;font-size:14.8px;line-height:18px;color:#e8e8e8;white-space:nowrap">Installed Titles</div>
<svg class="a" style="left:307px;top:49px" width="10" height="15" viewBox="0 0 10 15"><path d="M1.5 5.5L5 2L8.5 5.5M1.5 9.5L5 13L8.5 9.5" stroke="#d0d0d0" stroke-width="1.4" fill="none" stroke-linecap="round" stroke-linejoin="round"/></svg>
<div class="a" style="left:819px;top:47px;font-size:14.2px;line-height:18px;color:#d8d8d8;white-space:nowrap">2K 23.98p, Stereo</div>
<div class="a" style="left:0;top:72px;width:1000px;height:1.2px;background:#040404"></div>

<!-- sidebar -->
<div class="a" style="left:0;top:73px;width:202px;height:604px;background:#202020"></div>
<svg style="position:absolute;left:5px;top:81.0px" width="10" height="9" viewBox="0 0 10 9"><path d="M0 0H9.5L4.75 8.5Z" fill="#d6d6d6"/></svg><svg style="position:absolute;left:17px;top:76.5px" width="15" height="15"><use href="#icT"/></svg><div class="sb" style="left:43px;top:75.7px">Titles</div><svg style="position:absolute;left:25.5px;top:101.3px" width="15" height="15"><use href="#icT"/></svg><div class="sb" style="left:51px;top:100.5px">3D</div><svg style="position:absolute;left:25.5px;top:126.1px" width="15" height="15"><use href="#icT"/></svg><div class="sb" style="left:51px;top:125.3px">3D Cinematic</div><svg style="position:absolute;left:25.5px;top:150.8px" width="15" height="15"><use href="#icT"/></svg><div class="sb" style="left:51px;top:150.0px">360°</div><svg style="position:absolute;left:25.5px;top:175.6px" width="15" height="15"><use href="#icT"/></svg><div class="sb" style="left:51px;top:174.8px">Build In/Out</div><svg style="position:absolute;left:25.5px;top:200.4px" width="15" height="15"><use href="#icT"/></svg><div class="sb" style="left:51px;top:199.6px">Bumper/Opener</div><svg style="position:absolute;left:25.5px;top:225.2px" width="15" height="15"><use href="#icT"/></svg><div class="sb" style="left:51px;top:224.4px">Credits</div><svg style="position:absolute;left:25.5px;top:250.0px" width="15" height="15"><use href="#icT"/></svg><div class="sb" style="left:51px;top:249.2px">Custom</div><svg style="position:absolute;left:25.5px;top:274.7px" width="15" height="15"><use href="#icT"/></svg><div class="sb" style="left:51px;top:273.9px">Dataflow - 3D Texts</div><svg style="position:absolute;left:25.5px;top:299.5px" width="15" height="15"><use href="#icT"/></svg><div class="sb" style="left:51px;top:298.7px">Elements</div><div style="position:absolute;left:0;top:319.5px;width:202px;height:24.5px;background:#4b4b4b"></div><svg style="position:absolute;left:25.5px;top:324.3px" width="15" height="15"><use href="#icT"/></svg><div class="sb" style="left:51px;top:323.5px">FCPX Message Studio</div><svg style="position:absolute;left:25.5px;top:349.1px" width="15" height="15"><use href="#icT"/></svg><div class="sb" style="left:51px;top:348.3px">FCPX ProText Studio</div><svg style="position:absolute;left:25.5px;top:373.9px" width="15" height="15"><use href="#icT"/></svg><div class="sb" style="left:51px;top:373.1px">FCPX Smooth Motio...</div><svg style="position:absolute;left:25.5px;top:398.6px" width="15" height="15"><use href="#icT"/></svg><div class="sb" style="left:51px;top:397.8px">FCPX Split Screen S...</div><svg style="position:absolute;left:25.5px;top:423.4px" width="15" height="15"><use href="#icT"/></svg><div class="sb" style="left:51px;top:422.6px">FCPX Titles Studio</div><svg style="position:absolute;left:25.5px;top:448.2px" width="15" height="15"><use href="#icT"/></svg><div class="sb" style="left:51px;top:447.4px">Lower Thirds</div><svg style="position:absolute;left:25.5px;top:473.0px" width="15" height="15"><use href="#icT"/></svg><div class="sb" style="left:51px;top:472.2px">Lower Thirds Pro</div><svg style="position:absolute;left:25.5px;top:497.8px" width="15" height="15"><use href="#icT"/></svg><div class="sb" style="left:51px;top:497.0px">Social</div><svg style="position:absolute;left:25.5px;top:522.5px" width="15" height="15"><use href="#icT"/></svg><div class="sb" style="left:51px;top:521.7px">Template</div><svg style="position:absolute;left:25.5px;top:547.3px" width="15" height="15"><use href="#icT"/></svg><div class="sb" style="left:51px;top:546.5px">YouTube Title</div><svg style="position:absolute;left:5px;top:576.6px" width="10" height="9" viewBox="0 0 10 9"><path d="M0 0H9.5L4.75 8.5Z" fill="#d6d6d6"/></svg><svg style="position:absolute;left:17px;top:572.1px" width="15" height="15"><use href="#icG"/></svg><div class="sb" style="left:43px;top:571.3px">Generators</div><svg style="position:absolute;left:25.5px;top:596.9px" width="15" height="15"><use href="#icG"/></svg><div class="sb" style="left:51px;top:596.1px">360°</div><svg style="position:absolute;left:25.5px;top:621.7px" width="15" height="15"><use href="#icG"/></svg><div class="sb" style="left:51px;top:620.9px">Backgrounds</div><svg style="position:absolute;left:25.5px;top:646.4px" width="15" height="15"><use href="#icG"/></svg><div class="sb" style="left:51px;top:645.6px">Elements</div><svg style="position:absolute;left:25.5px;top:671.2px" width="15" height="15"><use href="#icG"/></svg><div class="sb" style="left:51px;top:670.4px">Solids</div>
<div class="a" style="left:202px;top:73px;width:2px;height:604px;background:#101010"></div>

<!-- browser -->
<div class="a" style="left:204px;top:73px;width:600px;height:31px;background:#1e1e1e"></div>
<div class="a" style="left:626px;top:78px;width:171px;height:22px;border-radius:4px;background:#171717;border:1px solid #2a2a2a"></div>
<svg class="a" style="left:633px;top:82px" width="16" height="16" viewBox="0 0 16 16"><circle cx="6.3" cy="6.3" r="4.8" stroke="#dcdcdc" stroke-width="1.6" fill="none"/><path d="M9.8 9.8L14 14" stroke="#dcdcdc" stroke-width="1.8" stroke-linecap="round"/></svg>
<div class="a" style="left:656px;top:82px;font-size:14px;line-height:17px;color:#8a8a8a">Search</div>
<div class="a" style="left:204px;top:103.5px;width:600px;height:2px;background:#101010"></div>
<div class="a" style="left:204px;top:105px;width:600px;height:572px;background:#212121"></div>
<div class="sep" style="top:115px"></div><div class="hdr" style="top:118.7px">IOS</div><svg class="th" style="left:217px;top:143px" width="104" height="58"><use href="#leaf"/></svg><div class="tt" style="left:252px;top:169.5px;color:#e01818"><span style="display:inline-block;width:3.5px;height:3.5px;border:0.6px solid #e01818;border-radius:50%;margin-right:1px"></span>Not Delivered</div><div class="lb" style="left:217px;top:210px">IOS Info Failed</div><svg class="th" style="left:335px;top:143px" width="104" height="58"><use href="#leaf"/></svg><div class="tt" style="left:377px;top:169.5px">Delivered</div><div class="lb" style="left:335px;top:210px">IOS Info Received</div><svg class="th" style="left:452px;top:143px" width="104" height="58"><use href="#leaf"/></svg><div class="tt" style="left:489px;top:169.5px">Seen 12:47 PM</div><div class="lb" style="left:452px;top:210px">IOS Info Seen</div><svg class="th" style="left:569px;top:143px" width="104" height="58"><use href="#leaf"/></svg><div style="position:absolute;left:616px;top:169px;width:9px;height:5px;background:#e6e6e6;border-radius:3px"></div><div class="lb" style="left:569px;top:210px">IOS Is Typing</div><svg class="th" style="left:687px;top:143px" width="104" height="58"><use href="#leaf"/></svg><div style="position:absolute;left:710px;top:146px;width:57px;height:14px;background:#dedede;border-radius:2px"></div><div style="position:absolute;left:712px;top:147px;width:3px;height:3px;background:#3a8a3a;border-radius:50%"></div><div style="position:absolute;left:712px;top:152px;width:22px;height:1.3px;background:#555"></div><div style="position:absolute;left:712px;top:155px;width:28px;height:1.2px;background:#888"></div><div class="lb" style="left:687px;top:210px">IOS Notification</div><svg class="th" style="left:217px;top:247px" width="104" height="58"><use href="#leaf"/></svg><div style="position:absolute;left:247px;top:259px;width:43px;height:33px;background:#fff;border-radius:2px"><div style="position:absolute;left:0;width:100%;top:11px;text-align:center;font:bold 7.5px/7px 'Liberation Sans',sans-serif;color:#111">Studio</div><div style="position:absolute;left:10.5px;width:22px;top:18px;height:2.2px;background:linear-gradient(90deg,#ffd400 0 16%,#18c04a 16% 32%,#17b5e8 32% 48%,#e8208a 48% 64%,#d02020 64% 80%,#2040e0 80%)"></div></div><div class="lb" style="left:217px;top:314px">IOS Receive<br>Media</div><svg class="th" style="left:335px;top:247px" width="104" height="58"><use href="#leaf"/></svg><div style="position:absolute;left:368px;top:272px;width:37px;height:7px;background:#e8e8e8;border-radius:3.5px"></div><div style="position:absolute;left:372px;top:275px;width:28px;height:1px;background:#999"></div><div class="lb" style="left:335px;top:314px">IOS Receive<br>Message</div><svg class="th" style="left:452px;top:247px" width="104" height="58"><use href="#leaf"/></svg><div style="position:absolute;left:499px;top:272px;width:10px;height:7px;background:#e8e8e8;border-radius:3.5px"></div><div class="lb" style="left:452px;top:314px">IOS Receive Voice<br>Message</div><svg class="th" style="left:569px;top:247px" width="104" height="58"><use href="#leaf"/></svg><div style="position:absolute;left:599px;top:259px;width:43px;height:33px;background:#fff;border-radius:2px"><div style="position:absolute;left:0;width:100%;top:11px;text-align:center;font:bold 7.5px/7px 'Liberation Sans',sans-serif;color:#111">Studio</div><div style="position:absolute;left:10.5px;width:22px;top:18px;height:2.2px;background:linear-gradient(90deg,#ffd400 0 16%,#18c04a 16% 32%,#17b5e8 32% 48%,#e8208a 48% 64%,#d02020 64% 80%,#2040e0 80%)"></div></div><div class="lb" style="left:569px;top:314px">IOS Send Media</div><svg class="th" style="left:687px;top:247px" width="104" height="58"><use href="#leaf"/></svg><div style="position:absolute;left:720px;top:272px;width:37px;height:6.5px;background:#2a7ee8;border-radius:3.5px"></div><div style="position:absolute;left:725px;top:275px;width:27px;height:1px;background:#cfe0ff"></div><div class="lb" style="left:687px;top:314px">IOS Send<br>Message</div><svg class="th" style="left:217px;top:350px" width="104" height="58"><use href="#leaf"/></svg><div style="position:absolute;left:264px;top:376px;width:9px;height:6px;background:#2a7ee8;border-radius:3px"></div><div class="lb" style="left:217px;top:417px">IOS Send Voice<br>Message</div><svg class="th" style="left:335px;top:350px" width="104" height="58"><use href="#leaf"/></svg><div style="position:absolute;left:379px;top:375px;width:15px;height:8px;background:#9a9a9a;border-radius:2px"></div><div class="lb" style="left:335px;top:417px">Simple Voice<br>Message</div><div class="sep" style="top:450px"></div><div class="hdr" style="top:453.3px">New Android</div><svg class="th" style="left:217px;top:477px" width="104" height="58"><use href="#leaf"/></svg><div class="tt" style="left:249px;top:504px;color:#e01818"><span style="display:inline-block;width:3px;height:3px;background:#e01818;border-radius:50%;margin-right:1px"></span>Failed to send</div><div class="lb" style="left:217px;top:544px">New Android Info<br>Failed</div><svg class="th" style="left:335px;top:477px" width="104" height="58"><use href="#leaf"/></svg><div class="tt" style="left:379px;top:504px">Received</div><div class="lb" style="left:335px;top:544px">New Android Info<br>Received</div><svg class="th" style="left:452px;top:477px" width="104" height="58"><use href="#leaf"/></svg><div class="tt" style="left:488px;top:504px">&#10003; Seen 12:47 PM</div><div class="lb" style="left:452px;top:544px">New Android Info<br>Seen</div><svg class="th" style="left:569px;top:477px" width="104" height="58"><use href="#leaf"/></svg><div style="position:absolute;left:615px;top:503px;width:10px;height:6px;background:#f0f0f0;border-radius:1px"></div><div class="lb" style="left:569px;top:544px">New Android Is<br>Typing</div><svg class="th" style="left:687px;top:477px" width="104" height="58"><use href="#leaf"/></svg><div style="position:absolute;left:710px;top:480px;width:57px;height:13px;background:#ececec;border-radius:1px"></div><div style="position:absolute;left:712px;top:481.5px;width:3px;height:3px;background:#2a6ad8;border-radius:50%"></div><div style="position:absolute;left:712px;top:486px;width:20px;height:1.3px;background:#555"></div><div style="position:absolute;left:712px;top:489px;width:26px;height:1.2px;background:#999"></div><div class="lb" style="left:687px;top:544px">New Android<br>Notification</div><svg class="th" style="left:217px;top:581px" width="104" height="58"><use href="#leaf"/></svg><div style="position:absolute;left:247px;top:593px;width:43px;height:33px;background:#fff;border-radius:2px"><div style="position:absolute;left:0;width:100%;top:11px;text-align:center;font:bold 7.5px/7px 'Liberation Sans',sans-serif;color:#111">Studio</div><div style="position:absolute;left:10.5px;width:22px;top:18px;height:2.2px;background:linear-gradient(90deg,#ffd400 0 16%,#18c04a 16% 32%,#17b5e8 32% 48%,#e8208a 48% 64%,#d02020 64% 80%,#2040e0 80%)"></div></div><div class="lb" style="left:217px;top:648px">New Android<br>Receive Media</div><svg class="th" style="left:335px;top:581px" width="104" height="58"><use href="#leaf"/></svg><div style="position:absolute;left:368px;top:606.5px;width:37px;height:7px;background:#f0f0f0;border-radius:1px"></div><div style="position:absolute;left:372px;top:609.5px;width:22px;height:1px;background:#999"></div><div class="lb" style="left:335px;top:648px">New Android<br>Receive Message</div><svg class="th" style="left:452px;top:581px" width="104" height="58"><use href="#leaf"/></svg><div style="position:absolute;left:479px;top:606px;width:48px;height:9px;background:#f4f4f4;border-radius:1px"></div><div class="lb" style="left:452px;top:648px">New Android<br>Receive...essage</div><svg class="th" style="left:569px;top:581px" width="104" height="58"><use href="#leaf"/></svg><div style="position:absolute;left:599px;top:593px;width:43px;height:33px;background:#fff;border-radius:2px"><div style="position:absolute;left:0;width:100%;top:9px;text-align:center;font:bold 10.5px/10px 'Liberation Sans',sans-serif;color:#111">Studio</div><div style="position:absolute;left:5px;width:33px;top:19.5px;height:3.5px;background:linear-gradient(90deg,#ffd400 0 16%,#18c04a 16% 32%,#17b5e8 32% 48%,#e8208a 48% 64%,#d02020 64% 80%,#2040e0 80%)"></div></div><div class="lb" style="left:569px;top:648px">New Android<br>Send Media</div><svg class="th" style="left:687px;top:581px" width="104" height="58"><use href="#leaf"/></svg><div style="position:absolute;left:720px;top:607px;width:37px;height:6.5px;background:#f2ea80;border-radius:1px"></div><div style="position:absolute;left:724px;top:610px;width:28px;height:1px;background:#8a8450"></div><div class="lb" style="left:687px;top:648px">New Android<br>Send Message</div>
<div class="a" style="left:796px;top:110px;width:7px;height:260px;border-radius:3.5px;background:#8c8c8c"></div>
<div class="a" style="left:804px;top:41px;width:2px;height:636px;background:#0e0e0e"></div>

<!-- viewer -->
<div class="a" style="left:806px;top:73px;width:194px;height:572px;background:#161616"></div>
<svg class="a" style="left:806px;top:155px" width="194" height="410" viewBox="0 0 194 410">
<defs>
<linearGradient id="cur" x1="0" x2="1" y1="0" y2="0"><stop offset="0" stop-color="#e4e8f4"/><stop offset="0.08" stop-color="#d4daec"/><stop offset="0.2" stop-color="#e8ecf6"/><stop offset="0.3" stop-color="#d8deee"/><stop offset="0.42" stop-color="#eaedf6"/><stop offset="0.55" stop-color="#dde2f0"/><stop offset="0.7" stop-color="#e6eaf4"/><stop offset="0.8" stop-color="#d6dcec"/><stop offset="1" stop-color="#e2e6f2"/></linearGradient>
<linearGradient id="gw" x1="0" y1="0" x2="0.3" y2="1"><stop offset="0" stop-color="#d3d3db"/><stop offset="0.5" stop-color="#c6c6d0"/><stop offset="1" stop-color="#c8c7cc"/></linearGradient>
<linearGradient id="mg" x1="0" y1="0" x2="0" y2="1"><stop offset="0" stop-color="#5e626c"/><stop offset="0.25" stop-color="#6c6e78"/><stop offset="0.31" stop-color="#8a8eac"/><stop offset="0.38" stop-color="#74767e"/><stop offset="0.62" stop-color="#6a6c72"/><stop offset="0.7" stop-color="#626468"/><stop offset="0.78" stop-color="#74767c"/><stop offset="1" stop-color="#7a7c82"/></linearGradient>
<pattern id="mp" patternUnits="userSpaceOnUse" width="3" height="3"><circle cx="1.5" cy="1.5" r="0.8" fill="#3a3a40" opacity="0.35"/></pattern>
</defs>
<rect width="194" height="410" fill="#e2e6f2"/>
<rect width="194" height="45" fill="url(#cur)"/>
<rect x="0" y="140" width="194" height="18" fill="#d2d4de"/>
<rect x="0" y="158" width="194" height="10" fill="#e4e6ee"/>
<rect x="0" y="168" width="194" height="37" fill="#a8a8b0"/>
<rect x="0" y="205" width="194" height="12" fill="#dddeea"/>
<rect x="0" y="217" width="194" height="38" fill="#b8b4b4"/>
<rect x="0" y="224" width="194" height="5" fill="#c8c4c4"/>
<rect x="0" y="238" width="194" height="5" fill="#c8c4c4"/>
<rect x="0" y="255" width="194" height="6" fill="#4c5266"/>
<rect x="0" y="261" width="194" height="3" fill="#9a9cab"/>
<rect x="0" y="264" width="194" height="146" fill="url(#mg)"/>
<rect x="0" y="264" width="194" height="146" fill="url(#mp)"/>
<path d="M0 43H169Q177 43 177 52L170 125L159 195L147 265L121 410H0Z" fill="url(#gw)"/>
</svg>
<div class="a" style="left:806px;top:645px;width:194px;height:32px;background:#1d1d1d"></div>
<svg class="a" style="left:819.5px;top:652.5px" width="19" height="18" viewBox="0 0 19 18"><rect x="3" y="2.5" width="13" height="13" stroke="#e4e4e4" stroke-width="1.5" fill="none"/><circle cx="3" cy="2.5" r="1.9" fill="#1d1d1d" stroke="#e4e4e4" stroke-width="1.2"/><circle cx="16" cy="2.5" r="1.9" fill="#1d1d1d" stroke="#e4e4e4" stroke-width="1.2"/><circle cx="3" cy="15.5" r="1.9" fill="#1d1d1d" stroke="#e4e4e4" stroke-width="1.2"/><circle cx="16" cy="15.5" r="1.9" fill="#1d1d1d" stroke="#e4e4e4" stroke-width="1.2"/></svg>
<svg class="a" style="left:846px;top:657px" width="10" height="7" viewBox="0 0 10 7"><path d="M1.5 1.5L5 5L8.5 1.5" stroke="#e4e4e4" stroke-width="1.5" fill="none" stroke-linecap="round" stroke-linejoin="round"/></svg>
<svg class="a" style="left:866px;top:650px" width="21" height="20" viewBox="0 0 21 20"><path d="M10 8.5L17.5 16.5" stroke="#e4e4e4" stroke-width="3" stroke-linecap="round"/><path d="M10 8.5L17.5 16.5" stroke="#1d1d1d" stroke-width="1" stroke-linecap="round"/><path d="M5 2L5.9 4.6L8.5 5.5L5.9 6.4L5 9L4.1 6.4L1.5 5.5L4.1 4.6Z M5 10.5L5.9 13.1L8.5 14L5.9 14.9L5 17.5L4.1 14.9L1.5 14L4.1 13.1Z" fill="#e4e4e4"/><circle cx="13" cy="2.5" r="1.2" fill="#e4e4e4"/><circle cx="3" cy="9.5" r="1" fill="#e4e4e4"/></svg>
<svg class="a" style="left:897px;top:657px" width="10" height="7" viewBox="0 0 10 7"><path d="M1.5 1.5L5 5L8.5 1.5" stroke="#e4e4e4" stroke-width="1.5" fill="none" stroke-linecap="round" stroke-linejoin="round"/></svg>
<svg class="a" style="left:914px;top:651px" width="20" height="20" viewBox="0 0 20 20"><path d="M5 16.5A7.5 7.5 0 1 1 15 16.5" stroke="#e4e4e4" stroke-width="1.6" fill="none" stroke-linecap="round"/><circle cx="10" cy="10.5" r="2" stroke="#e4e4e4" stroke-width="1.5" fill="none"/><path d="M11.5 9L15 4.5" stroke="#e4e4e4" stroke-width="1.6" stroke-linecap="round"/></svg>
<svg class="a" style="left:944px;top:657px" width="10" height="7" viewBox="0 0 10 7"><path d="M1.5 1.5L5 5L8.5 1.5" stroke="#e4e4e4" stroke-width="1.5" fill="none" stroke-linecap="round" stroke-linejoin="round"/></svg>

<!-- tooltip + cursor -->
<div class="a" style="left:623px;top:317px;width:231px;height:36px;background:#353535;border:1px solid #444;border-radius:2px"></div>
<div class="a" style="left:630px;top:320px;font-size:13px;line-height:15px;color:#e6e6e6;white-space:nowrap">Drag the title to the timeline, or to the<br>beginning, middle, or end of a clip</div>
<svg class="a" style="left:622.3px;top:295.3px" width="16" height="24" viewBox="0 0 16 24"><path d="M2 1V18L6 14.3L9 21L11.5 20L8.7 13.5H14Z" fill="#111" stroke="#f0f0f0" stroke-width="1.2" stroke-linejoin="round"/></svg>

<!-- timeline toolbar -->
<div class="a" style="left:0;top:677px;width:1000px;height:1px;background:#0c0c0c"></div>
<div class="a" style="left:0;top:678px;width:1000px;height:32px;background:#2f2f2f"></div><div class="a" style="left:0;top:710px;width:1000px;height:1px;background:#080808"></div>
<div class="a" style="left:32.5px;top:687px;font-size:14px;line-height:17px;color:#7c7c7c">Index</div>
<div class="a" style="left:100px;top:678px;width:1px;height:33px;background:#1c1c1c"></div>
<svg class="a" style="left:113px;top:684px" width="135" height="22" viewBox="0 0 135 22"><g fill="none" stroke="#5e5e5e" stroke-width="1.2"><rect x="5" y="1.5" width="11" height="8"/><path d="M5 9.5V14"/><rect x="37" y="1.5" width="11" height="8"/><path d="M42.5 9.5V15M40 13L42.5 15.5L45 13"/><rect x="68" y="1.5" width="11" height="8"/><path d="M78 11V16M75.5 14L78 16.5L80.5 14"/><rect x="99" y="1.5" width="11" height="8"/></g><g fill="#4e4e4e"><rect x="2" y="14" width="18" height="6"/><rect x="33" y="14" width="5" height="6"/><rect x="47" y="14" width="6" height="6"/><rect x="64" y="14" width="10" height="6"/><rect x="96" y="13" width="18" height="7"/></g><path d="M123 10L126 13L129 10" stroke="#e0e0e0" stroke-width="1.5" fill="none" stroke-linecap="round"/></svg>
<svg class="a" style="left:273px;top:686px" width="30" height="18" viewBox="0 0 30 18"><path d="M1.5 1V14L4.5 11L7 16.5L8.5 15.8L6.2 10.5H10Z" fill="#8a8a8a"/><path d="M20 7.5L23 10.5L26 7.5" stroke="#e0e0e0" stroke-width="1.5" fill="none" stroke-linecap="round"/></svg>
<svg class="a" style="left:620px;top:688px" width="10" height="12" viewBox="0 0 10 12"><path d="M7 1.5L2.5 6L7 10.5" stroke="#e0e0e0" stroke-width="1.8" fill="none" stroke-linecap="round" stroke-linejoin="round"/></svg>
<div class="a" style="left:701px;top:685px;font-size:14.9px;line-height:18px;color:#e4e4e4;white-space:nowrap">Untitled Project 2</div>
<svg class="a" style="left:824px;top:690px" width="10" height="8" viewBox="0 0 10 8"><path d="M1.5 2L5 5.5L8.5 2" stroke="#e0e0e0" stroke-width="1.5" fill="none" stroke-linecap="round" stroke-linejoin="round"/></svg>
<div class="a" style="left:851px;top:686px;font-size:14px;line-height:17px;color:#8c8c8c;white-space:nowrap"><span style="color:#d4b21e">09:22</span> / 09:22</div>
<div class="a" style="left:0;top:711px;width:1000px;height:2.2px;background:#3434a0"></div>

<!-- timeline -->
<div class="a" style="left:0;top:713px;width:1000px;height:287px;background:#1f1f1f"></div>
<div class="a" style="left:0;top:730px;width:46px;height:270px;background:#1c1c1c"></div>
<div class="tk" style="left:47px"></div><div class="tl" style="left:57.5px">00:00:00:00</div>
<div class="tks" style="left:162px"></div>
<div class="tk" style="left:278px"></div><div class="tl" style="left:288.5px">00:00:02:00</div>
<div class="tks" style="left:393px"></div>
<div class="tk" style="left:508px"></div><div class="tl" style="left:519px">00:00:04:00</div>
<div class="tks" style="left:624px"></div>
<div class="tk" style="left:739px"></div><div class="tl" style="left:750px">00:00:06:00</div>
<div class="tks" style="left:855px"></div>
<div class="tk" style="left:970px"></div><div class="tl" style="left:981px">00:00:08:00</div>

<!-- clip -->
<div class="a" style="left:46px;top:823px;width:960px;height:81px;background:#1c3661;border:2px solid #f2d600;border-radius:3px;overflow:hidden">
</div>
<div class="a" style="left:49.5px;top:825px;font-size:11.6px;line-height:13px;color:#c4d0ec;white-space:nowrap">video (3)</div>
<svg class="a" style="left:48px;top:839px" width="952" height="44"><defs><pattern id="fp" patternUnits="userSpaceOnUse" x="5" width="76.8" height="44"><use href="#frame" width="76.8" height="44"/></pattern></defs><rect width="952" height="44" fill="url(#fp)"/></svg>

<!-- playhead -->
<div class="a" style="left:188.5px;top:726px;width:1.2px;height:274px;background:#e0e0e0"></div>
<svg class="a" style="left:184px;top:716px" width="11" height="15" viewBox="0 0 11 15"><path d="M1.5 2.2Q1.5 1.2 2.5 1.2H8.5Q9.5 1.2 9.5 2.2V8.8L5.5 13.2L1.5 8.8Z" fill="#333" stroke="#e4e4e4" stroke-width="1.3" stroke-linejoin="round"/></svg>
<svg class="a" style="left:185px;top:817px" width="10" height="10" viewBox="0 0 10 10"><path d="M0 0H10V6L5 10L0 6Z" fill="#7474e6"/></svg>

<svg class="a" style="left:0;top:0" width="10" height="10" viewBox="0 0 10 10"><path d="M0 0H9Q0 0 0 9Z" fill="#000"/><path d="M9 0.5Q0.5 0.5 0.5 9" stroke="#5a5a5a" stroke-width="1" fill="none"/></svg>
<div class="a" style="left:0;top:9px;width:1px;height:991px;background:rgba(255,255,255,0.11)"></div>
</body></html>
